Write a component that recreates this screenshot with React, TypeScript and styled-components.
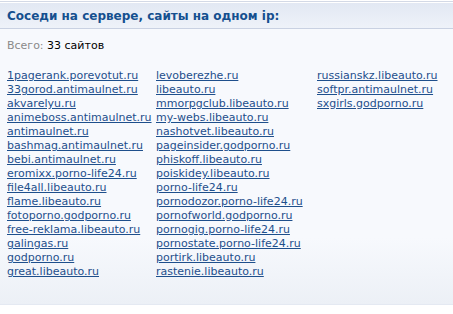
import React from "react";
import styled, { createGlobalStyle } from "styled-components";

const Global = createGlobalStyle`
  html, body { margin: 0; padding: 0; background: #ffffff; }
  body { font-family: "DejaVu Sans", Verdana, sans-serif; }
`;

const Panel = styled.section`
  width: 453px;
  box-sizing: border-box;
  margin-top: 1px;
  border-top: 1px solid #d3d9e6;
  border-bottom: 1px solid #e4e9f2;
  background: linear-gradient(to bottom, #f7f9fd 0%, #f7f9fd 78%, #ecf0f6 100%);
  padding-bottom: 2px;
`;

const Header = styled.h2`
  margin: 0;
  height: 27px;
  box-sizing: border-box;
  padding: 0 7px;
  display: flex;
  align-items: center;
  border-top: 1px solid #ffffff;
  border-bottom: 1px solid #c9d1e2;
  background: linear-gradient(to bottom, #e2e8f3 0%, #eef2f9 100%);
  font-size: 12px;
  font-weight: bold;
  color: #15508f;
`;

const Body = styled.div`
  padding: 10px 7px 23px;
`;

const Total = styled.div`
  font-size: 11px;
  color: #000;
  margin-bottom: 17px;
`;

const Label = styled.span`
  color: #8a8a8a;
`;

const Columns = styled.div`
  display: grid;
  grid-template-columns: 149px 161px auto;
  align-items: start;
`;

const Column = styled.ul`
  list-style: none;
  margin: 0;
  padding: 0;
`;

const Item = styled.li`
  line-height: 14px;
  font-size: 11px;
`;

const Link = styled.a`
  color: #1e4f8c;
  text-decoration: underline;
`;

const columns: string[][] = [
  [
    "1pagerank.porevotut.ru",
    "33gorod.antimaulnet.ru",
    "akvarelyu.ru",
    "animeboss.antimaulnet.ru",
    "antimaulnet.ru",
    "bashmag.antimaulnet.ru",
    "bebi.antimaulnet.ru",
    "eromixx.porno-life24.ru",
    "file4all.libeauto.ru",
    "flame.libeauto.ru",
    "fotoporno.godporno.ru",
    "free-reklama.libeauto.ru",
    "galingas.ru",
    "godporno.ru",
    "great.libeauto.ru",
  ],
  [
    "levoberezhe.ru",
    "libeauto.ru",
    "mmorpgclub.libeauto.ru",
    "my-webs.libeauto.ru",
    "nashotvet.libeauto.ru",
    "pageinsider.godporno.ru",
    "phiskoff.libeauto.ru",
    "poiskidey.libeauto.ru",
    "porno-life24.ru",
    "pornodozor.porno-life24.ru",
    "pornofworld.godporno.ru",
    "pornogig.porno-life24.ru",
    "pornostate.porno-life24.ru",
    "portirk.libeauto.ru",
    "rastenie.libeauto.ru",
  ],
  ["russianskz.libeauto.ru", "softpr.antimaulnet.ru", "sxgirls.godporno.ru"],
];

export default function App() {
  return (
    <>
      <Global />
      <Panel>
        <Header>Соседи на сервере, сайты на одном ip:</Header>
        <Body>
          <Total>
            <Label>Всего:</Label> 33 сайтов
          </Total>
          <Columns>
            {columns.map((col, i) => (
              <Column key={i}>
                {col.map((site) => (
                  <Item key={site}>
                    <Link href="#">{site}</Link>
                  </Item>
                ))}
              </Column>
            ))}
          </Columns>
        </Body>
      </Panel>
    </>
  );
}
